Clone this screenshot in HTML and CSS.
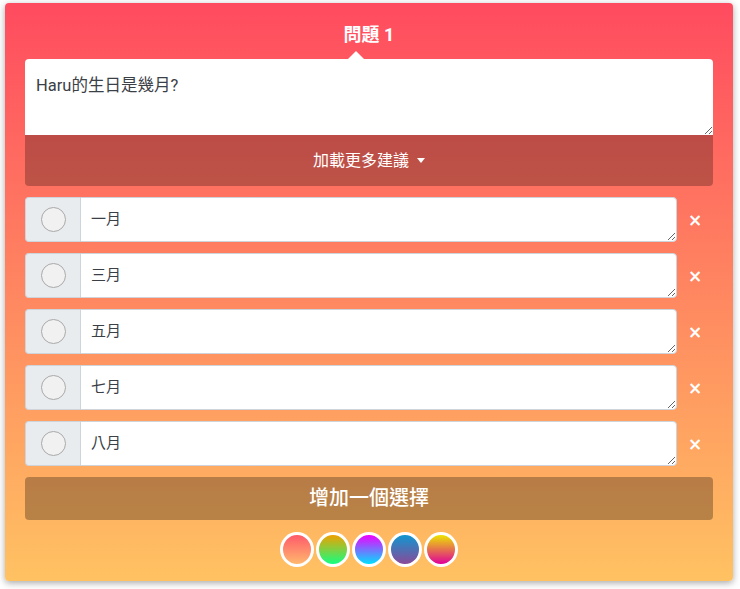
FILE: index.html
```html
<!DOCTYPE html>
<html lang="zh-Hant">
<head>
<meta charset="utf-8">
<link rel="stylesheet" href="styles.css">
</head>
<body>
<div class="card">
  <div class="title">問題 1<span class="pointer"></span></div>
  <div class="question">
    <textarea class="q-input">Haru的生日是幾月?</textarea>
    <div class="suggest">加載更多建議 <span class="caret"></span></div>
  </div>
  <div class="options">
    <div class="option">
      <div class="addon"><span class="radio"></span></div>
      <textarea class="opt-input">一月</textarea>
      <span class="remove">×</span>
    </div>
    <div class="option">
      <div class="addon"><span class="radio"></span></div>
      <textarea class="opt-input">三月</textarea>
      <span class="remove">×</span>
    </div>
    <div class="option">
      <div class="addon"><span class="radio"></span></div>
      <textarea class="opt-input">五月</textarea>
      <span class="remove">×</span>
    </div>
    <div class="option">
      <div class="addon"><span class="radio"></span></div>
      <textarea class="opt-input">七月</textarea>
      <span class="remove">×</span>
    </div>
    <div class="option">
      <div class="addon"><span class="radio"></span></div>
      <textarea class="opt-input">八月</textarea>
      <span class="remove">×</span>
    </div>
  </div>
  <div class="add-btn">增加一個選擇</div>
  <div class="swatches">
    <span class="swatch s1"></span>
    <span class="swatch s2"></span>
    <span class="swatch s3"></span>
    <span class="swatch s4"></span>
    <span class="swatch s5"></span>
  </div>
</div>
</body>
</html>
```
FILE: styles.css
```css
html, body {
  margin: 0;
  background: #ffffff;
}
body {
  padding: 3px 7px 8px 5px;
  font-family: Roboto, "Liberation Sans", "Noto Sans CJK TC", sans-serif;
}
.card {
  width: 728px;
  height: 578px;
  box-sizing: border-box;
  padding: 20px 20px 0 20px;
  border-radius: 4px;
  background: linear-gradient(to bottom, #ff4b5f, #ffc262);
  box-shadow: 0 2px 7px rgba(0, 0, 0, 0.35);
}
.title {
  position: relative;
  height: 24px;
  line-height: 24px;
  margin-bottom: 12px;
  text-align: center;
  color: #fff;
  font-weight: bold;
  font-size: 18px;
  font-family: Roboto, "Noto Sans CJK TC", sans-serif;
}
.pointer {
  position: absolute;
  left: 323px;
  bottom: -12px;
  width: 0;
  height: 0;
  border-left: 8px solid transparent;
  border-right: 8px solid transparent;
  border-bottom: 8px solid #fff;
}
.question {
  display: flex;
  flex-direction: column;
}
.q-input {
  display: block;
  height: 76px;
  box-sizing: border-box;
  margin: 0;
  padding: 15px 11px;
  border: none;
  border-radius: 4px 4px 0 0;
  font-family: Roboto, "Noto Sans CJK TC", sans-serif;
  font-size: 16.5px;
  line-height: 24px;
  color: #3b4046;
  resize: vertical;
  outline: none;
}
.suggest {
  height: 51px;
  line-height: 51px;
  text-align: center;
  background: rgba(0, 0, 0, 0.26);
  border-radius: 0 0 4px 4px;
  color: #fff;
  font-size: 16px;
  font-family: Roboto, "Noto Sans CJK TC", sans-serif;
}
.caret {
  display: inline-block;
  margin-left: 4px;
  vertical-align: 3px;
  border-left: 4px solid transparent;
  border-right: 4px solid transparent;
  border-top: 5px solid #fff;
}
.options {
  display: flex;
  flex-direction: column;
  gap: 11px;
  margin-top: 11px;
}
.option {
  display: flex;
  align-items: center;
  height: 45px;
}
.addon {
  width: 55px;
  height: 45px;
  box-sizing: border-box;
  display: flex;
  align-items: center;
  justify-content: center;
  background: #e9ecef;
  border: 1px solid #ced4da;
  border-right: none;
  border-radius: 4px 0 0 4px;
}
.radio {
  width: 23px;
  height: 23px;
  border-radius: 50%;
  background: #f1f1f1;
  border: 1px solid #a9a9a9;
}
.opt-input {
  display: block;
  flex: 0 0 597px;
  height: 45px;
  box-sizing: border-box;
  margin: 0;
  padding: 11px 10px;
  border: 1px solid #ced4da;
  border-radius: 0 4px 4px 0;
  font-family: Roboto, "Noto Sans CJK TC", sans-serif;
  font-size: 15px;
  line-height: 21px;
  color: #3b4046;
  background: #fff;
  resize: vertical;
  outline: none;
}
.remove {
  flex: 1;
  text-align: center;
  color: #fff;
  font-weight: bold;
  font-size: 17px;
  font-family: "DejaVu Sans", sans-serif;
}
.add-btn {
  margin-top: 11px;
  height: 43px;
  line-height: 43px;
  text-align: center;
  color: #fff;
  font-size: 20px;
  font-weight: 500;
  background: rgba(0, 0, 0, 0.28);
  border-radius: 4px;
  font-family: Roboto, "Noto Sans CJK TC", sans-serif;
}
.swatches {
  display: flex;
  justify-content: center;
  gap: 2px;
  margin-top: 12px;
}
.swatch {
  width: 34px;
  height: 35px;
  box-sizing: border-box;
  border: 3px solid #fff;
  border-radius: 50%;
}
.s1 { background: linear-gradient(#ff5a6a, #ffb86e); }
.s2 { background: linear-gradient(#f0a000, #14ff80); }
.s3 { background: linear-gradient(#f000ff, #00e0ff); }
.s4 { background: linear-gradient(#1096d0, #8a4a98); }
.s5 { background: linear-gradient(#ece400, #e0009a); }
```
